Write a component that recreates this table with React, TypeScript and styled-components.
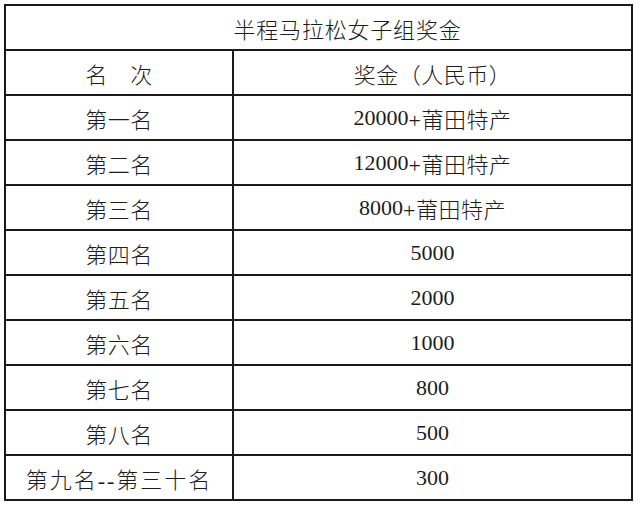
import React from 'react';
import styled, { createGlobalStyle } from 'styled-components';

const GlobalStyle = createGlobalStyle`
  html, body {
    margin: 0;
    padding: 0;
    background: #ffffff;
  }
  body {
    font-family: "Liberation Serif", "Noto Sans CJK SC", serif;
    color: #1c1c1c;
  }
`;

const Page = styled.div`
  padding: 4px 0 0 4px;
  width: 640px;
  height: 507px;
  box-sizing: border-box;
`;

const Table = styled.div`
  width: 629px;
  border: 2px solid #1a1a1a;
  box-sizing: border-box;
  display: flex;
  flex-direction: column;
`;

const TitleRow = styled.div`
  height: 43px;
  display: flex;
  align-items: center;
  justify-content: center;
  padding-left: 58px;
  font-size: 22px;
  font-weight: 300;
  letter-spacing: 0.8px;
`;

const Row = styled.div`
  display: grid;
  grid-template-columns: 226px 1fr;
  height: 45px;
  border-top: 2px solid #1a1a1a;
  box-sizing: border-box;
`;

const Cell = styled.div<{ $divider?: boolean; $wide?: boolean }>`
  display: flex;
  align-items: center;
  justify-content: center;
  font-size: 22px;
  font-weight: 300;
  letter-spacing: ${(p) => (p.$wide ? '2px' : '0.5px')};
  border-left: ${(p) => (p.$divider ? '2px solid #1a1a1a' : 'none')};
`;

const Num = styled.span`
  font-size: 22px;
  font-weight: 400;
  letter-spacing: 0;
`;

type Prize = { rank: string; amount: string; extra?: string };

const prizes: Prize[] = [
  { rank: '第一名', amount: '20000', extra: '+莆田特产' },
  { rank: '第二名', amount: '12000', extra: '+莆田特产' },
  { rank: '第三名', amount: '8000', extra: '+莆田特产' },
  { rank: '第四名', amount: '5000' },
  { rank: '第五名', amount: '2000' },
  { rank: '第六名', amount: '1000' },
  { rank: '第七名', amount: '800' },
  { rank: '第八名', amount: '500' },
  { rank: '第九名--第三十名', amount: '300' },
];

export default function App() {
  return (
    <>
      <GlobalStyle />
      <Page>
        <Table>
          <TitleRow>半程马拉松女子组奖金</TitleRow>
          <Row>
            <Cell>名　次</Cell>
            <Cell $divider>奖金（人民币）</Cell>
          </Row>
          {prizes.map((p) => (
            <Row key={p.rank}>
              <Cell $wide={p.rank.length > 3}>{p.rank}</Cell>
              <Cell $divider>
                <Num>{p.amount}</Num>
                {p.extra}
              </Cell>
            </Row>
          ))}
        </Table>
      </Page>
    </>
  );
}
